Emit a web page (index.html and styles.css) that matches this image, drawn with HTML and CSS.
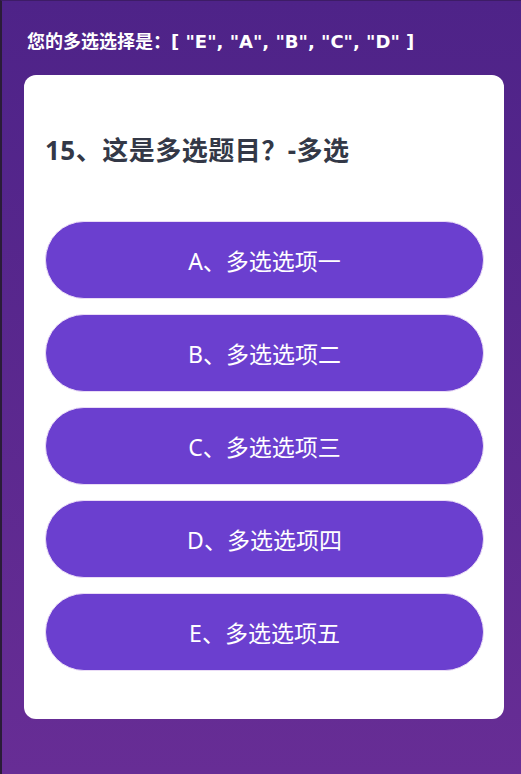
FILE: index.html
```html
<!DOCTYPE html>
<html lang="zh">

<head>
    <meta charset="UTF-8">
    <meta name="viewport" content="width=device-width, initial-scale=1.0">
    <title>多选题</title>
    <link rel="stylesheet" href="styles.css">
</head>

<body>
    <div class="page">
        <p class="picked">您的多选选择是：[ "E", "A", "B", "C", "D" ]</p>

        <div class="card">
            <h1 class="question">15、这是多选题目？-多选</h1>
            <div class="options">
                <div class="option">A、多选选项一</div>
                <div class="option">B、多选选项二</div>
                <div class="option">C、多选选项三</div>
                <div class="option">D、多选选项四</div>
                <div class="option">E、多选选项五</div>
            </div>
        </div>
    </div>
</body>

</html>
```

FILE: styles.css
```css
body {
    margin: 0;
    font-family: "Noto Sans", "Noto Sans CJK SC", sans-serif;
}

.page {
    min-height: 774px;
    box-sizing: border-box;
    border-left: 2px solid #2a1c38;
    border-top: 1px solid #3d1c66;
    padding: 29px 17px 0 22px;
    background: linear-gradient(#4e2388, #672d95);
}

.picked {
    margin: 0 0 22px 3px;
    font-family: "DejaVu Sans", "Noto Sans CJK SC", sans-serif;
    font-size: 18px;
    font-weight: bold;
    line-height: 23px;
    color: #fff;
}

.card {
    background-color: #fff;
    border-radius: 12px;
    padding: 60px 20px 48px 21px;
}

.question {
    margin: 0 0 56px 0;
    font-size: 26px;
    font-weight: bold;
    line-height: 30px;
    letter-spacing: 0.5px;
    color: #333847;
}

.options {
    display: flex;
    flex-direction: column;
    gap: 15px;
}

.option {
    height: 78px;
    box-sizing: border-box;
    border: 1px solid #eadcf6;
    border-radius: 39px;
    background-color: #6b3fcf;
    color: #fff;
    font-size: 23px;
    display: flex;
    align-items: center;
    justify-content: center;
}
```
